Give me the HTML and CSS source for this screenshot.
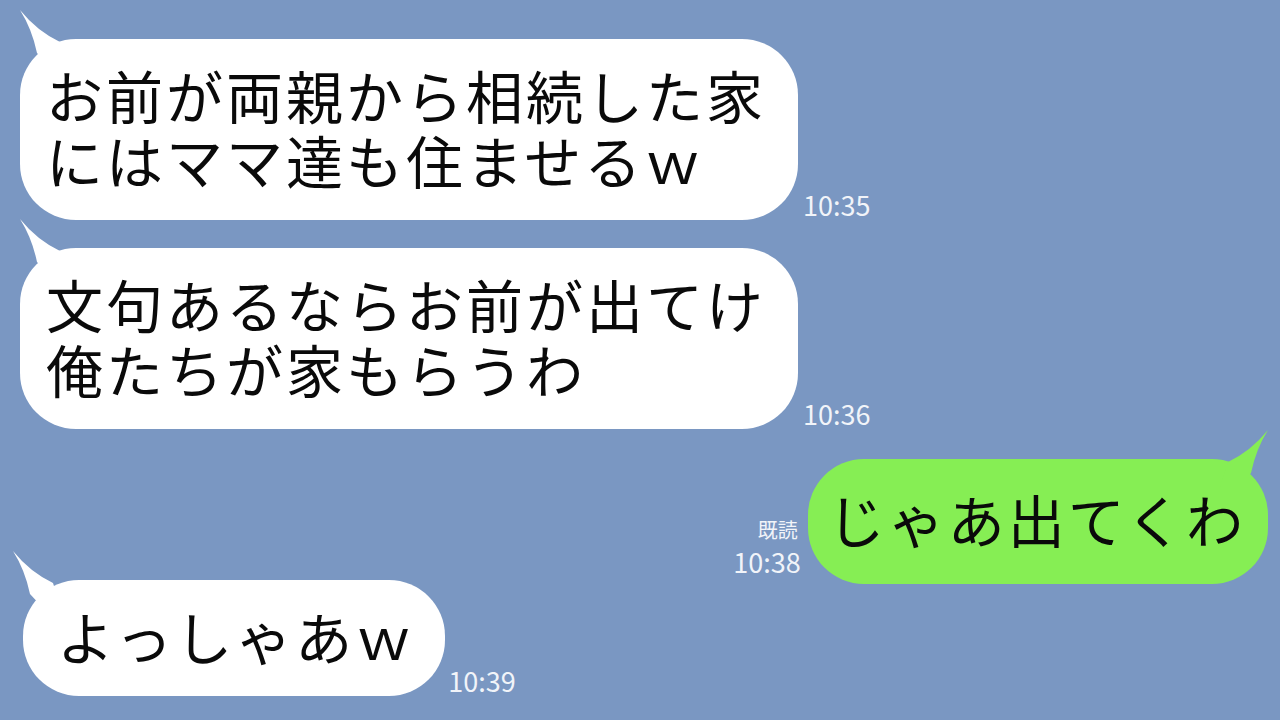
FILE: index.html
```html
<!DOCTYPE html>
<html lang="ja">
  <head>
    <meta charset="UTF-8" />
    <meta name="viewport" content="width=device-width, initial-scale=1.0" />
    <title>トーク</title>
    <link rel="stylesheet" href="styles.css">
  </head>
  <body>
    <main class="chat">
      <!-- 相手: 1 -->
      <div class="row row--in row--first">
        <div class="bubble bubble--in">
          <svg class="tail" viewBox="0 0 60 60"><path d="M50 33 Q27 22 10 1 Q22 20 27 44 L40 58 L58 58 Z" /></svg>
          <p class="bubble__text">お前が両親から相続した家<br />にはママ達も住ませるｗ</p>
        </div>
        <div class="meta"><span class="time">10:35</span></div>
      </div>

      <!-- 相手: 2 -->
      <div class="row row--in">
        <div class="bubble bubble--in">
          <svg class="tail" viewBox="0 0 60 60"><path d="M50 33 Q27 22 10 1 Q22 20 27 44 L40 58 L58 58 Z" /></svg>
          <p class="bubble__text">文句あるならお前が出てけ<br />俺たちが家もらうわ</p>
        </div>
        <div class="meta"><span class="time">10:36</span></div>
      </div>

      <!-- 自分 -->
      <div class="row row--out">
        <div class="meta meta--out">
          <span class="read">既読</span>
          <span class="time">10:38</span>
        </div>
        <div class="bubble bubble--out">
          <svg class="tail" viewBox="0 0 60 60"><path d="M50 33 Q27 22 10 1 Q22 20 27 44 L40 58 L58 58 Z" /></svg>
          <p class="bubble__text">じゃあ出てくわ</p>
        </div>
      </div>

      <!-- 相手: 3 -->
      <div class="row row--in row--last">
        <div class="bubble bubble--in bubble--short">
          <svg class="tail" viewBox="0 0 60 60"><path d="M50 33 Q27 22 10 1 Q22 20 27 44 L40 58 L58 58 Z" /></svg>
          <p class="bubble__text">よっしゃあｗ</p>
        </div>
        <div class="meta meta--last"><span class="time">10:39</span></div>
      </div>
    </main>
  </body>
</html>
```

FILE: styles.css
```css
body {
  margin: 0;
  height: 100vh;
  overflow: hidden;
  background: #7a97c2;
  font-family: "Noto Sans CJK JP", "Noto Sans", sans-serif;
}

.chat {
  display: flex;
  flex-direction: column;
  padding: 39px 12px 0 20px;
}

.row {
  display: flex;
  align-items: flex-end;
  margin-top: 28px;
}

.row--first {
  margin-top: 0;
}

.row--out {
  justify-content: flex-end;
  margin-top: 30px;
}

.row--last {
  margin-top: -4px;
}

.bubble {
  position: relative;
  border-radius: 56px;
}

.bubble--in {
  background: #fff;
  padding: 23px 32px 28px 26px;
}

.bubble--out {
  background: #86ee54;
  padding: 27px 22px 33px 20px;
}

.bubble--short {
  margin-left: 3px;
  padding: 23px 30px 28px 34px;
}

.bubble__text {
  margin: 0;
  font-size: 57px;
  line-height: 65px;
  letter-spacing: 3px;
  color: #0a0a0a;
  white-space: nowrap;
}

/* しっぽ */
.tail {
  position: absolute;
  top: -30px;
  left: -10px;
  width: 60px;
  height: 60px;
  fill: #fff;
}

.bubble--short .tail {
  left: -20px;
}

.bubble--out .tail {
  left: auto;
  right: -10px;
  transform: scaleX(-1);
  fill: #86ee54;
}

.meta {
  display: flex;
  flex-direction: column;
  margin: 0 0 2px 5px;
  color: #f1f4f9;
}

.meta--out {
  align-items: flex-end;
  margin: 0 7px 9px 0;
}

.meta--last {
  margin-left: 3px;
}

.time {
  font-size: 27px;
  line-height: 27px;
}

.read {
  font-size: 20px;
  line-height: 24px;
  margin: 0 3px 6px 0;
}
```
